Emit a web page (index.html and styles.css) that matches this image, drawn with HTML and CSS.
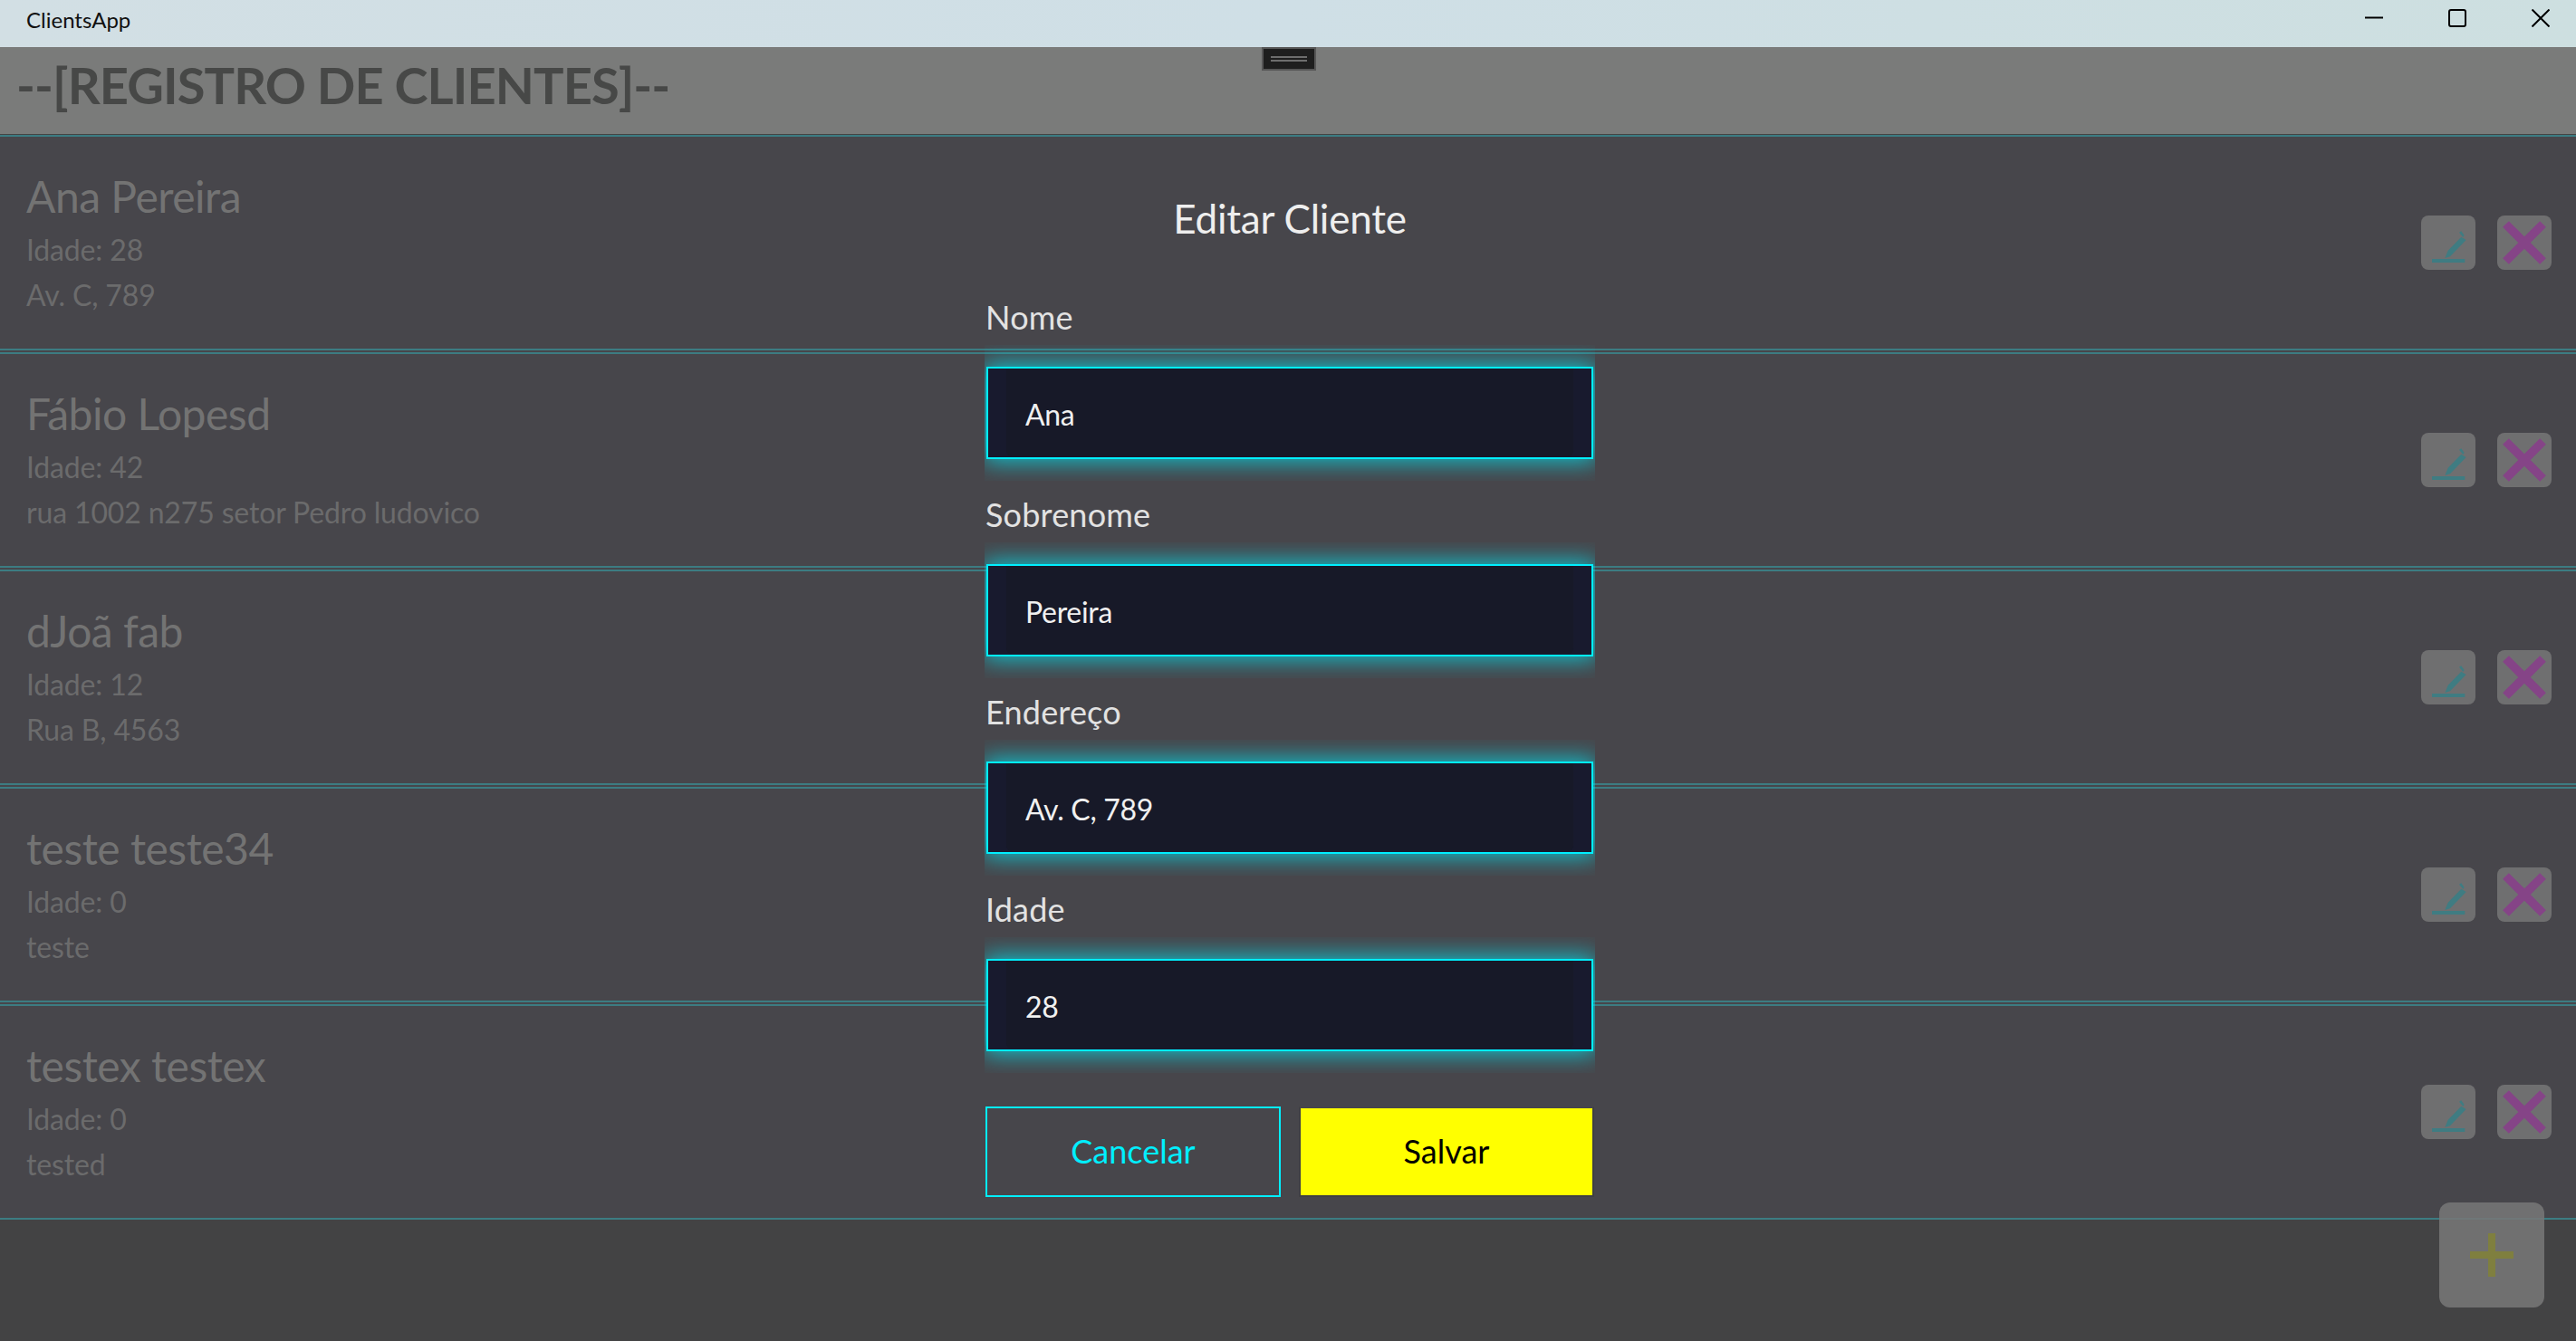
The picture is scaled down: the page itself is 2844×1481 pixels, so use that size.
FILE: index.html
```html
<!DOCTYPE html>
<html>
	<head>
		<meta charset="utf-8">
		<title>ClientsApp</title>
		<link rel="stylesheet" href="styles.css">
	</head>
	<body>
		<div class="app">
			<div class="titlebar">
				<span class="app-name">ClientsApp</span>
				<div class="caption">
					<svg width="20" height="20" viewBox="0 0 20 20"><path d="M0 9.500H20" stroke="#000" stroke-width="2"/></svg>
					<svg width="20" height="20" viewBox="0 0 20 20"><rect x="1" y="1" width="18" height="18" rx="2" fill="none" stroke="#000" stroke-width="2"/></svg>
					<svg width="20" height="20" viewBox="0 0 20 20"><path d="M0.500 0.500L19.500 19.500M19.500 0.500L0.500 19.500" stroke="#000" stroke-width="2"/></svg>
				</div>
			</div>
			<div class="header">
				<h1>--[REGISTRO DE CLIENTES]--</h1>
				<div class="handle"><i></i><i></i></div>
			</div>
			<ul class="clients">
				<li class="client">
					<div class="info">
						<div class="name">Ana Pereira</div>
						<div class="sub">Idade: 28</div>
						<div class="sub">Av. C, 789</div>
					</div>
					<div class="actions">
						<a class="btn"><svg width="60" height="60" viewBox="0 0 60 60"><path class="pen" d="M12 48H48.300V52H12ZM26.300 47L29.700 38.700L44.300 23.700L49.700 27L32 45.300ZM42 18.700L44.300 17.300L47.700 22L46.300 24Z"/></svg></a>
						<a class="btn"><svg width="60" height="60" viewBox="0 0 60 60"><path class="cross" d="M9.500 9.500L50.500 50.500M50.500 9.500L9.500 50.500"/></svg></a>
					</div>
				</li>
				<li class="client">
					<div class="info">
						<div class="name">Fábio Lopesd</div>
						<div class="sub">Idade: 42</div>
						<div class="sub">rua 1002 n275 setor Pedro ludovico</div>
					</div>
					<div class="actions">
						<a class="btn"><svg width="60" height="60" viewBox="0 0 60 60"><path class="pen" d="M12 48H48.300V52H12ZM26.300 47L29.700 38.700L44.300 23.700L49.700 27L32 45.300ZM42 18.700L44.300 17.300L47.700 22L46.300 24Z"/></svg></a>
						<a class="btn"><svg width="60" height="60" viewBox="0 0 60 60"><path class="cross" d="M9.500 9.500L50.500 50.500M50.500 9.500L9.500 50.500"/></svg></a>
					</div>
				</li>
				<li class="client">
					<div class="info">
						<div class="name">dJoã fab</div>
						<div class="sub">Idade: 12</div>
						<div class="sub">Rua B, 4563</div>
					</div>
					<div class="actions">
						<a class="btn"><svg width="60" height="60" viewBox="0 0 60 60"><path class="pen" d="M12 48H48.300V52H12ZM26.300 47L29.700 38.700L44.300 23.700L49.700 27L32 45.300ZM42 18.700L44.300 17.300L47.700 22L46.300 24Z"/></svg></a>
						<a class="btn"><svg width="60" height="60" viewBox="0 0 60 60"><path class="cross" d="M9.500 9.500L50.500 50.500M50.500 9.500L9.500 50.500"/></svg></a>
					</div>
				</li>
				<li class="client">
					<div class="info">
						<div class="name">teste teste34</div>
						<div class="sub">Idade: 0</div>
						<div class="sub">teste</div>
					</div>
					<div class="actions">
						<a class="btn"><svg width="60" height="60" viewBox="0 0 60 60"><path class="pen" d="M12 48H48.300V52H12ZM26.300 47L29.700 38.700L44.300 23.700L49.700 27L32 45.300ZM42 18.700L44.300 17.300L47.700 22L46.300 24Z"/></svg></a>
						<a class="btn"><svg width="60" height="60" viewBox="0 0 60 60"><path class="cross" d="M9.500 9.500L50.500 50.500M50.500 9.500L9.500 50.500"/></svg></a>
					</div>
				</li>
				<li class="client">
					<div class="info">
						<div class="name">testex testex</div>
						<div class="sub">Idade: 0</div>
						<div class="sub">tested</div>
					</div>
					<div class="actions">
						<a class="btn"><svg width="60" height="60" viewBox="0 0 60 60"><path class="pen" d="M12 48H48.300V52H12ZM26.300 47L29.700 38.700L44.300 23.700L49.700 27L32 45.300ZM42 18.700L44.300 17.300L47.700 22L46.300 24Z"/></svg></a>
						<a class="btn"><svg width="60" height="60" viewBox="0 0 60 60"><path class="cross" d="M9.500 9.500L50.500 50.500M50.500 9.500L9.500 50.500"/></svg></a>
					</div>
				</li>
			</ul>
			<div class="footer"></div>

			<a class="add"><svg width="48" height="48" viewBox="0 0 48 48"><path d="M20 0H28V20H48V28H28V48H20V28H0V20H20Z" fill="#7f7f3f"/></svg></a>

			<div class="dialog">
				<h2>Editar Cliente</h2>
				<div class="group">
					<label>Nome</label>
					<div class="field"><input type="text" value="Ana"></div>
				</div>
				<div class="group">
					<label>Sobrenome</label>
					<div class="field"><input type="text" value="Pereira"></div>
				</div>
				<div class="group">
					<label>Endereço</label>
					<div class="field"><input type="text" value="Av. C, 789"></div>
				</div>
				<div class="group">
					<label>Idade</label>
					<div class="field"><input type="text" value="28"></div>
				</div>
				<div class="buttons">
					<a class="cancel">Cancelar</a>
					<a class="save">Salvar</a>
				</div>
			</div>
		</div>
	</body>
</html>
```

FILE: styles.css
```css
* {margin:0; padding:0; box-sizing:border-box;}
li {list-style:none;}
html, body {height:100%; overflow:hidden;}
body {
	font-family:"Lato","Noto Sans",sans-serif;
	background:#47464b;
}

.app {
	position:relative;
	height:1481px;
	display:flex;
	flex-direction:column;
	background:#47464b;
}

/* window bar */
.titlebar {
	height:52px;
	display:flex;
	justify-content:space-between;
	padding:10px 29px 0;
	background:linear-gradient(90deg,#d2dfe4,#cfdfe6 50%,#cddfe0);
}
.app-name {font-size:24px; line-height:24px; color:#111;}
.caption {display:flex; gap:72px;}

/* header */
.header {
	position:relative;
	height:97px;
	padding-left:18px;
	background:#7a7b7a;
	border-bottom:1px solid #444;
}
.header h1 {
	font-size:56px;
	line-height:83px;
	font-weight:700;
	letter-spacing:-0.9px;
	color:#474847;
}
.handle {
	position:absolute;
	top:0;
	left:1393px;
	width:60px;
	height:26px;
	display:flex;
	flex-direction:column;
	justify-content:center;
	gap:2px;
	padding:0 8px;
	background:#1e1e1e;
	border:2px solid #565656;
}
.handle i {display:block; height:2px; background:#6d6d6d;}

/* list */
.client {
	height:238px;
	margin-bottom:2px;
	padding:0 27px 0 29px;
	display:flex;
	justify-content:space-between;
	align-items:center;
	border-top:2px solid #3c7c82;
	border-bottom:2px solid #3c7c82;
}
.client:last-child {margin-bottom:0;}
.name {font-size:48px; line-height:66px; letter-spacing:-0.5px; color:#737373; margin-bottom:1px;}
.sub {font-size:32px; line-height:50px; letter-spacing:-0.15px; color:#6b6b6c;}
.info {padding-bottom:1px;}
.actions {display:flex; gap:24px;}
.btn {
	width:60px;
	height:60px;
	border-radius:8px;
	background:#6f6f70;
}
.btn svg {display:block;}
.pen {fill:#3f7c82;}
.cross {stroke:#854487; stroke-width:9.500; fill:none;}

.footer {flex:1; background:#434344;}

.add {
	position:absolute;
	right:35px;
	bottom:37px;
	width:116px;
	height:116px;
	border-radius:12px;
	background:rgba(118,118,118,0.88);
	display:flex;
	align-items:center;
	justify-content:center;
}

/* dialog */
.dialog {
	position:absolute;
	top:52px;
	left:1088px;
	width:672px;
	padding-top:159px;
}
.dialog h2 {
	font-size:44px;
	line-height:60px;
	font-weight:400;
	letter-spacing:-0.2px;
	text-align:center;
	color:#eee;
	margin-bottom:18px;
}
.group {padding-top:37px;}
.group label {
	display:block;
	font-size:36px;
	line-height:48px;
	letter-spacing:0.2px;
	color:#e2e2e2;
	margin-bottom:31px;
}
.field {
	height:102px;
	margin:0 1px;
	padding:0 20px;
	border:2px solid #00efff;
	background:#181a2e;
	box-shadow:0 0 24px 3px rgba(0,225,240,0.8);
	clip-path:inset(-24px -2px);
}
.field input {
	display:block;
	width:100%;
	height:97px;
	padding:3px 0 0 21px;
	border:0;
	border-radius:0 0 6px 6px;
	outline:0;
	background:#171928;
	font-family:inherit;
	font-size:32px;
	letter-spacing:-0.3px;
	color:#f0f0f0;
}
.buttons {
	display:flex;
	gap:20px;
	margin-top:61px;
}
.cancel, .save {
	height:100px;
	display:flex;
	align-items:center;
	justify-content:center;
	padding-bottom:2px;
	font-size:36px;
}
.cancel {
	width:326px;
	color:#00efff;
	border:2px solid #00efff;
}
.save {
	width:326px;
	color:#000;
	background:#ff0;
	border:solid #3f3f43;
	border-width:2px;
	border-top-color:#47464b;
}
```
